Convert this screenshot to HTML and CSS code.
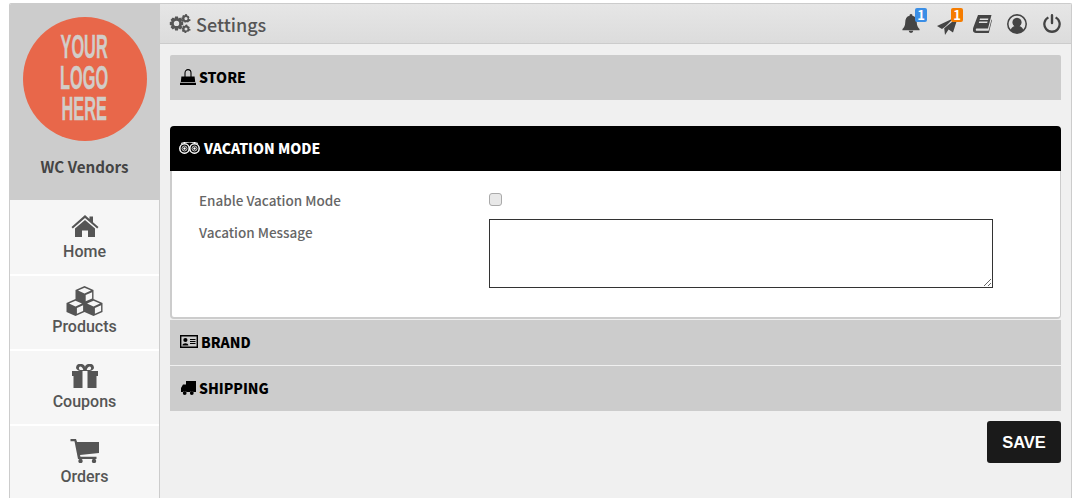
FILE: index.html
```html
<!DOCTYPE html>
<html lang="en">
<head>
<meta charset="utf-8">
<title>Settings</title>
<link rel="stylesheet" href="styles.css">
</head>
<body>
<div class="shell">
  <aside class="sidebar">
    <div class="brand">
      <div class="logo"><span>YOUR</span><span>LOGO</span><span>HERE</span></div>
      <div class="vendor">WC Vendors</div>
    </div>
    <nav class="nav">
      <a class="nav-item"><svg class="nav-icon" viewBox="0 0 28 24"><path d="M14 1 L18.5 5 V2.5 H22 V8.2 L27.5 13 L26.2 14.6 L14 4 L1.8 14.6 L.5 13Z"/><path d="M14 6 L24 14.6 V23 H17 V16.5 H11 V23 H4 V14.6Z"/></svg><span>Home</span></a>
      <a class="nav-item"><svg class="nav-icon nav-icon-cubes" viewBox="0 0 36 30"><path d="M18 0 L27 4 V13 L36 17 V26 L27 30 L18 26 L9 30 L0 26 V17 L9 13 V4Z"/><path class="cut" d="M11.5 4.4 L18 1.8 L24.5 4.4 L18 7.4Z M2.5 17.4 L9 14.8 L15.5 17.4 L9 20.4Z M20.5 17.4 L27 14.8 L33.5 17.4 L27 20.4Z M19.2 9 L25.6 6.2 V12.4 L19.2 15.2Z M10.4 22 L16.6 19.2 V25 L10.4 27.8Z M28.4 22 L34.6 19.2 V25 L28.4 27.8Z"/></svg><span>Products</span></a>
      <a class="nav-item"><svg class="nav-icon" viewBox="0 0 26 24"><path fill-rule="evenodd" d="M0 7 H8 A4.5 3.6 0 1 1 13 4 A4.5 3.6 0 1 1 18 7 H26 V12 H24.5 V24 H15.5 V7 H10.5 V24 H1.5 V12 H0Z M8 2.4 A2 2 0 0 0 8 6 H11.3 Q10.5 2.4 8 2.4Z M18 2.4 A2 2 0 0 1 18 6 H14.7 Q15.5 2.4 18 2.4Z"/></svg><span>Coupons</span></a>
      <a class="nav-item"><svg class="nav-icon" viewBox="0 0 29 24"><path d="M0 0 H5.5 L6.6 3 H28.5 V14 L9.5 16 L10 17.8 H26 V20 H7.5 L4 2.2 H0Z"/><circle cx="10" cy="22" r="2.2"/><circle cx="23.5" cy="22" r="2.2"/></svg><span>Orders</span></a>
    </nav>
  </aside>
  <main class="main">
    <header class="topbar">
      <h1 class="title"><svg class="title-icon" viewBox="0 0 22 19"><path fill-rule="evenodd" d="M6 2.6 H9 L9.4 4.6 L11.2 3.5 L13.4 5.7 L12.3 7.5 L14.2 7.9 V11 L12.3 11.4 L13.4 13.2 L11.2 15.4 L9.4 14.3 L9 16.4 H6 L5.6 14.3 L3.8 15.4 L1.6 13.2 L2.7 11.4 L.8 11 V7.9 L2.7 7.5 L1.6 5.7 L3.8 3.5 L5.6 4.6Z M7.5 6.7 A2.7 2.7 0 1 0 7.5 12.1 A2.7 2.7 0 1 0 7.5 6.7Z"/><path fill-rule="evenodd" d="M16.5 0 L18 .3 L18.2 1.4 L19.6 2 L20.5 3.2 L19.8 4.2 L20.2 5 L21.5 5.4 V6.8 L20.2 7.2 L19 8.6 L17.8 8 L17 8.6 H15.4 L15 7.6 L13.6 8 L12.6 6.8 L13.4 5.6 L12.4 5 V3.6 L13.6 3.2 L13.2 2 L14.4 1 L15.4 1.6Z M17 3 A1.6 1.6 0 1 0 17 6.2 A1.6 1.6 0 1 0 17 3Z"/><path fill-rule="evenodd" d="M17 10.5 L18.4 10.8 L18.6 12 L20 12.4 L20.8 13.6 L20 14.6 L21.5 15.2 V16.4 L20 16.8 L19.2 18 L18 17.6 L17 19 H15.6 L15.2 17.8 L13.8 18 L12.9 16.8 L13.6 15.8 L12.6 15.2 V14 L13.8 13.6 L13.4 12.4 L14.6 11.4 L15.6 12Z M17 13.4 A1.5 1.5 0 1 0 17 16.4 A1.5 1.5 0 1 0 17 13.4Z"/></svg>Settings</h1>
      <div class="tools">
        <span class="tool tool-bell"><svg viewBox="0 0 20 21"><path d="M10 0 A1.6 1.6 0 0 1 11.6 1.8 C15 2.6 16.4 5.4 16.4 9 C16.4 13 18 15 19.5 16.5 V18 H.5 V16.5 C2 15 3.6 13 3.6 9 C3.6 5.4 5 2.6 8.4 1.8 A1.6 1.6 0 0 1 10 0Z M7.5 18.6 H12.5 A2.5 2.4 0 0 1 7.5 18.6Z"/></svg><b class="badge badge-blue">1</b></span>
        <span class="tool tool-plane"><svg viewBox="0 0 21 18"><path d="M0 9 L17 1 L8.4 9.6 L5 12Z"/><path d="M21 0 L16 15.5 L11.6 12.4 L8 18 L7.2 11.2Z"/></svg><b class="badge badge-orange">1</b></span>
        <span class="tool tool-book"><svg viewBox="0 0 19 18"><path fill-rule="evenodd" d="M5 0 H18.5 L15 13.6 H3.8 C2.5 13.6 2.4 15.8 3.6 15.8 H15.6 L18.5 4.5 L19 5 L15.8 18 H3 C0 18 -.6 15.5 .3 12.6Z M7 3.5 L6.6 5 H15 L15.4 3.5Z M6.2 6.6 L5.8 8 H14.2 L14.6 6.6Z"/></svg></span>
        <span class="tool tool-user"><svg viewBox="0 0 20 20"><path fill-rule="evenodd" d="M10 0 A10 10 0 1 1 10 20 A10 10 0 1 1 10 0Z M10 1.7 A8.3 8.3 0 0 0 3.7 15.4 C4.6 13.6 6 12.5 7.4 12.2 A4.6 4.6 0 1 1 12.6 12.2 C14 12.5 15.4 13.6 16.3 15.4 A8.3 8.3 0 0 0 10 1.7Z"/></svg></span>
        <span class="tool tool-power"><svg viewBox="0 0 18 19"><path d="M9 0 A1.2 1.2 0 0 1 10.2 1.2 V9 A1.2 1.2 0 0 1 7.8 9 V1.2 A1.2 1.2 0 0 1 9 0Z"/><path d="M4.7 2.4 L6 4.3 A6.5 6.5 0 1 0 12 4.3 L13.3 2.4 A8.8 8.8 0 1 1 4.7 2.4Z"/></svg></span>
      </div>
    </header>
    <div class="content">
      <section class="acc acc-store">
        <svg class="acc-icon acc-icon-bag" viewBox="0 0 16 16"><path d="M1.4 7.5 H14.6 L15.2 13 H.8Z"/><path d="M0 13.8 H16 V16 H0Z"/><path d="M5 8 V4 A3 3.4 0 0 1 11 4 V8" fill="none" stroke="#000" stroke-width="1.1"/></svg>STORE
      </section>
      <section class="panel">
        <div class="acc acc-active">
          <svg class="acc-icon acc-icon-owl" viewBox="0 0 21 12"><g fill="none" stroke="#fff"><circle cx="5.5" cy="6.5" r="4.7" stroke-width="1.5"/><circle cx="15.5" cy="6.5" r="4.7" stroke-width="1.5"/><circle cx="5.5" cy="6.5" r="2.5" stroke-width=".8"/><circle cx="15.5" cy="6.5" r="2.5" stroke-width=".8"/><path d="M2 1.4 C7 -.4 14 -.4 19 1.4"/></g><circle cx="5.5" cy="6.5" r="1.2" fill="#fff"/><circle cx="15.5" cy="6.5" r="1.2" fill="#fff"/></svg>VACATION MODE
        </div>
        <form class="form">
          <label class="field-label" for="vac">Enable Vacation Mode</label>
          <div class="field-check"><input id="vac" class="check" type="checkbox"></div>
          <label class="field-label field-label-msg" for="msg">Vacation Message</label>
          <textarea id="msg" class="message"></textarea>
        </form>
      </section>
      <section class="acc acc-brand">
        <svg class="acc-icon acc-icon-id" viewBox="0 0 18 13"><path fill-rule="evenodd" d="M0 0 H18 V13 H0Z M1.4 1.4 V11.6 H16.6 V1.4Z"/><circle cx="5.4" cy="5" r="2.1"/><path d="M2.4 10.4 C2.4 7.4 8.4 7.4 8.4 10.4Z M10 4 H15.5 V5 H10Z M10 6 H15.5 V7 H10Z M10 8 H15.5 V9 H10Z"/></svg>BRAND
      </section>
      <section class="acc acc-ship">
        <svg class="acc-icon acc-icon-truck" viewBox="0 0 15 14"><path d="M5 0 H15 V11 H12.5 A2 2 0 0 0 9 11 H5.6 A2.2 2.2 0 0 0 1.8 11 H0 V7 L2 3.4 H5Z"/><circle cx="3.7" cy="12" r="1.9"/><circle cx="10.8" cy="12" r="1.9"/></svg>SHIPPING
      </section>
      <div class="actions"><button class="save" type="button">SAVE</button></div>
    </div>
  </main>
</div>
</body>
</html>
```

FILE: styles.css
```css
* { box-sizing: border-box; }
html, body { margin: 0; height: 100%; overflow: hidden; background: #fff; }
body {
  padding: 3px 14px 0 9px;
  font-family: "Noto Sans CJK SC", "Source Sans Pro", sans-serif;
}
.shell {
  display: flex;
  width: 1063px;
  height: 495px;
  overflow: hidden;
  border: 1px solid #ccc;
  border-bottom: 0;
  border-radius: 2px 2px 0 0;
  background: #f0f0f0;
}
.sidebar {
  flex: 0 0 150px;
  border-right: 1px solid #ccc;
  background: #f6f6f6;
}
.brand {
  height: 196px;
  background: #ccc;
  padding-top: 13px;
  text-align: center;
}
.logo {
  width: 124px;
  height: 124px;
  margin: 0 auto;
  padding-top: 14px;
  border-radius: 50%;
  background: #e8674a;
  color: #d2cdc8;
  font: 700 34px/31px "Liberation Sans", sans-serif;
  -webkit-text-stroke: .4px #d2cdc8;
  display: flex;
  flex-direction: column;
  align-items: center;
}
.logo span { display: block; transform: scaleX(.48); }
.vendor {
  margin-top: 13px;
  color: #444;
  font-size: 15.2px;
  line-height: 24px;
  font-weight: 700;
}
.nav { display: flex; flex-direction: column; padding-top: 1px; }
.nav-item {
  height: 75px;
  border-bottom: 2px solid #fff;
  color: #555;
  font: 500 16px/18px Roboto, sans-serif;
  text-align: center;
  display: flex;
  flex-direction: column;
  align-items: center;
  padding-top: 13px;
}
.nav-icon { display: block; flex: none; height: 24px; width: 30px; fill: #555; margin-bottom: 5px; }
.nav-icon-cubes { width: 37px; height: 30px; margin: -3px 1px 2px 0; }
.cut { fill: #f6f6f6; }
.main { flex: 1; min-width: 0; }
.topbar {
  height: 40px;
  display: flex;
  align-items: center;
  justify-content: space-between;
  padding: 0 10px 0 9px;
  border-bottom: 1px solid #ccc;
  background: linear-gradient(#e6e6e6, #dcdcdc);
}
.title {
  display: flex;
  align-items: center;
  margin: 0;
  color: #555;
  font-size: 18px;
  font-weight: 500;
}
.title-icon { width: 22px; height: 19px; margin-right: 5px; fill: #555; }
.tools { display: flex; gap: 15px; align-items: center; }
.tool { position: relative; display: block; }
.tool svg { display: block; width: 100%; height: 100%; fill: #444; }
.tool-bell { width: 18px; height: 21px; }
.tool-plane { width: 21px; height: 18px; margin: 5px 0 0 2px; }
.tool-book { width: 19px; height: 18px; }
.tool-user { width: 20px; height: 20px; }
.tool-power { width: 18px; height: 19px; margin-left: 1px; }
.badge {
  position: absolute;
  width: 12px;
  height: 14px;
  border-radius: 2px;
  color: #fff;
  font: 700 13px/14px "Noto Sans CJK SC", sans-serif;
  text-align: center;
}
.badge-blue { top: -5px; right: -7px; background: #3a8ee6; }
.badge-orange { top: -9px; right: -5px; background: #f57c00; }
.content { padding: 11px 10px 0; }
.acc {
  display: flex;
  align-items: center;
  height: 45px;
  padding: 0 0 2px 10px;
  background: #ccc;
  color: #000;
  font-size: 14px;
  font-weight: 900;
}
.acc-store { border-radius: 2px 2px 0 0; margin-bottom: 26px; }
.acc-icon { flex: none; width: 16px; height: 14px; margin-right: 3px; fill: #000; }
.acc-icon-bag { height: 16px; }
.acc-icon-owl { width: 21px; height: 12px; margin-right: 4px; margin-left: -1px; }
.acc-icon-id { width: 18px; height: 13px; margin-right: 3px; }
.acc-icon-truck { width: 15px; margin-left: 1px; margin-right: 3px; }
.acc-active { background: #000; color: #fff; border-radius: 4px 4px 0 0; }
.form {
  display: grid;
  grid-template-columns: 290px 504px;
  grid-template-rows: 27px 69px;
  height: 148px;
  padding: 21px 0 0 27px;
  border: solid #ccc;
  border-width: 0 1px 2px 2px;
  border-radius: 0 0 4px 4px;
  background: #fff;
}
.field-label { color: #666; font-size: 13.5px; line-height: 16px; font-weight: 500; }
.field-label-msg { padding-top: 5px; }
.check {
  appearance: none;
  display: block;
  width: 13px;
  height: 13px;
  margin: 1px 0 0;
  border: 1px solid #aaa;
  border-radius: 3px;
  background: #e8e8e8;
}
.message {
  display: block;
  width: 504px;
  height: 69px;
  margin: 0;
  border: 1px solid #333;
  border-radius: 0;
  background: #fff;
}
.acc-brand { margin-top: 1px; }
.acc-ship { margin-top: 1px; }
.actions { display: flex; justify-content: flex-end; margin-top: 10px; }
.save {
  width: 74px;
  height: 42px;
  padding: 1px 0 0;
  border: 0;
  border-radius: 3px;
  background: #1a1a1a;
  color: #fff;
  font: 700 16.5px "Liberation Sans", sans-serif;
}
```
